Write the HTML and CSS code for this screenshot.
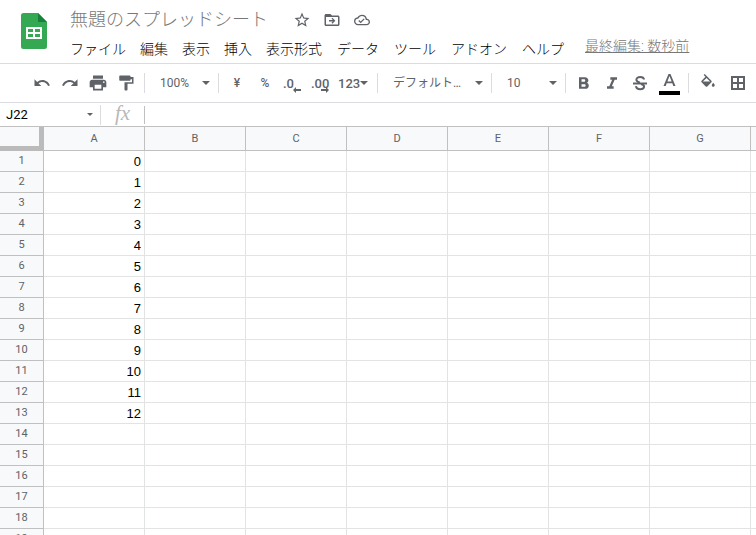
FILE: index.html
```html
<!DOCTYPE html>
<html lang="ja">
<head>
    <meta charset="utf-8">
    <title>無題のスプレッドシート</title>
    <link rel="stylesheet" href="styles.css">
</head>
<body>
    <header class="header">
        <a class="logo" href="#" aria-label="ホーム">
            <svg width="26" height="36" viewBox="0 0 26 36">
                <path fill="#34a853" d="M2.500 0H17l9 9v24.500a2.500 2.500 0 0 1-2.500 2.500h-21A2.500 2.500 0 0 1 0 33.500v-31A2.500 2.500 0 0 1 2.500 0z"/>
                <path fill="#188038" d="M17 0l9 9h-9z"/>
                <path fill="#fff" fill-rule="evenodd" d="M5 14h16v12H5zM7 16v3h5v-3zM14 16v3h5v-3zM7 21v3h5v-3zM14 21v3h5v-3z"/>
            </svg>
        </a>
        <div class="header-main">
            <div class="title-row">
                <h1 class="title">無題のスプレッドシート</h1>
                <button class="title-button" aria-label="スター">
                    <svg width="18" height="18" viewBox="0 0 24 24"><path d="M22 9.240l-7.190-.62L12 2 9.190 8.630 2 9.240l5.460 4.730L5.820 21 12 17.270 18.180 21l-1.630-7.030L22 9.240zM12 15.400l-3.760 2.270 1-4.280-3.320-2.880 4.380-.38L12 6.100l1.710 4.040 4.380.38-3.320 2.880 1 4.280L12 15.400z"/></svg>
                </button>
                <button class="title-button" aria-label="移動">
                    <svg width="18" height="18" viewBox="0 0 24 24"><path d="M20 6h-8l-2-2H4c-1.100 0-2 .9-2 2v12c0 1.100.9 2 2 2h16c1.100 0 2-.9 2-2V8c0-1.100-.9-2-2-2zm0 12H4V8h16v10zm-7.500-1l4-4-4-4-1.200 1.200 1.900 1.900H8v1.800h5.200l-1.900 1.900z"/></svg>
                </button>
                <button class="title-button" aria-label="保存状況">
                    <svg width="16" height="16" viewBox="0 0 24 24"><path d="M19.350 10.040A7.490 7.490 0 0 0 12 4C9.110 4 6.600 5.640 5.350 8.040A5.994 5.994 0 0 0 0 14c0 3.310 2.690 6 6 6h13c2.760 0 5-2.240 5-5 0-2.640-2.050-4.780-4.650-4.960zM19 18H6c-2.210 0-4-1.790-4-4 0-2.050 1.530-3.760 3.560-3.970l1.070-.11.5-.95A5.469 5.469 0 0 1 12 6c2.620 0 4.880 1.860 5.390 4.430l.3 1.500 1.530.11A2.980 2.980 0 0 1 22 15c0 1.650-1.350 3-3 3zm-9-3.820l-2.090-2.090L6.500 13.500 10 17l6.010-6.010-1.410-1.410z"/></svg>
                </button>
            </div>
            <nav class="menu">
                <button class="menu-item">ファイル</button>
                <button class="menu-item">編集</button>
                <button class="menu-item">表示</button>
                <button class="menu-item">挿入</button>
                <button class="menu-item">表示形式</button>
                <button class="menu-item">データ</button>
                <button class="menu-item">ツール</button>
                <button class="menu-item">アドオン</button>
                <button class="menu-item">ヘルプ</button>
                <a class="last-edit" href="#">最終編集: 数秒前</a>
            </nav>
        </div>
    </header>

    <div class="toolbar">
        <button class="tool" aria-label="元に戻す">
            <svg width="18" height="18" viewBox="0 0 24 24"><path d="M12.500 8c-2.650 0-5.050.99-6.900 2.600L2 7v9h9l-3.620-3.620c1.390-1.160 3.160-1.880 5.120-1.880 3.540 0 6.550 2.310 7.600 5.500l2.370-.78C21.080 11.030 17.150 8 12.500 8z"/></svg>
        </button>
        <button class="tool" aria-label="やり直し">
            <svg width="18" height="18" viewBox="0 0 24 24"><path d="M18.400 10.600C16.550 8.990 14.150 8 11.500 8c-4.650 0-8.580 3.030-9.960 7.220L3.900 16c1.050-3.190 4.050-5.500 7.600-5.500 1.950 0 3.730.72 5.120 1.880L13 16h9V7l-3.600 3.600z"/></svg>
        </button>
        <button class="tool" aria-label="印刷">
            <svg width="20" height="20" viewBox="0 0 24 24"><path d="M19 8H5c-1.660 0-3 1.340-3 3v6h4v4h12v-4h4v-6c0-1.660-1.340-3-3-3zm-3 11H8v-5h8v5zm3-7c-.55 0-1-.45-1-1s.45-1 1-1 1 .45 1 1-.45 1-1 1zm-1-9H6v4h12V3z"/></svg>
        </button>
        <button class="tool" aria-label="書式を貼り付け">
            <svg width="18" height="18" viewBox="0 0 24 24"><path d="M18 4V3c0-.55-.45-1-1-1H4c-.55 0-1 .45-1 1v5c0 .55.45 1 1 1h13c.55 0 1-.45 1-1V7h2v4H10v10c0 .55.45 1 1 1h2c.55 0 1-.45 1-1v-8h8V4h-4z"/></svg>
        </button>
        <span class="separator"></span>
        <div class="select-box zoom-box">
            <select class="select" aria-label="ズーム"><option>100%</option></select>
        </div>
        <span class="separator"></span>
        <button class="tool">¥</button>
        <button class="tool">%</button>
        <button class="tool decimal">.0
            <svg class="decimal-arrow" width="8" height="6" viewBox="0 0 8 6"><path d="M0 3l3-3v2h5v2H3v2z"/></svg>
        </button>
        <button class="tool decimal">.00
            <svg class="decimal-arrow" width="8" height="6" viewBox="0 0 8 6"><path d="M8 3L5 0v2H0v2h5v2z"/></svg>
        </button>
        <button class="tool format-button">123<span class="caret"></span></button>
        <span class="separator"></span>
        <div class="select-box font-box">
            <select class="select" aria-label="フォント"><option>デフォルト…</option></select>
        </div>
        <span class="separator"></span>
        <div class="select-box size-box">
            <select class="select" aria-label="フォントサイズ"><option>10</option></select>
        </div>
        <span class="separator"></span>
        <button class="tool" aria-label="太字">
            <svg width="20" height="20" viewBox="0 0 24 24"><path d="M15.600 11.790c.97-.67 1.650-1.770 1.650-2.790 0-2.260-1.750-4-4-4H6v14h8.040c2.090 0 3.710-1.700 3.710-3.790 0-1.520-.86-2.820-2.150-3.420zM9 7.500h3c.83 0 1.500.67 1.500 1.500s-.67 1.500-1.500 1.500H9v-3zm3.500 9H9v-3h3.500c.83 0 1.500.67 1.500 1.500s-.67 1.500-1.500 1.500z"/></svg>
        </button>
        <button class="tool" aria-label="斜体">
            <svg width="20" height="20" viewBox="0 0 24 24"><path d="M10 5v3h2.210l-3.420 8H6v3h8v-3h-2.210l3.420-8H18V5z"/></svg>
        </button>
        <button class="tool" aria-label="取り消し線">
            <svg width="18" height="18" viewBox="0 0 18 18"><path fill="none" stroke="#5f6368" stroke-width="2" d="M13 5.500C12.800 3.800 11.300 3 9.200 3 6.900 3 5.400 4.100 5.400 5.700c0 1.500 1.200 2.300 3.600 2.900M10 10c2 .5 3.100 1.300 3.100 2.600 0 1.600-1.600 2.600-3.900 2.600-2.400 0-4-1.100-4.200-3"/><path d="M2 8.500h14v2H2z"/></svg>
        </button>
        <button class="tool color-tool" aria-label="テキストの色">
            <svg width="21" height="24" viewBox="0 0 21 24"><path fill-rule="evenodd" d="M9.500 3h2l5 12h-2.200l-1-2.700H7.700l-1 2.700H4.500zM8.400 10.500h4.200l-2.100-5.600z"/><path fill="#000" d="M0 20h21v4H0z"/></svg>
        </button>
        <span class="separator"></span>
        <button class="tool color-tool" aria-label="塗りつぶしの色">
            <svg width="18" height="18" viewBox="0 0 24 24"><path d="M16.560 8.940L7.620 0 6.210 1.410l2.380 2.380-5.150 5.150a1.490 1.490 0 0 0 0 2.120l5.500 5.500c.29.290.68.440 1.060.440s.77-.15 1.060-.44l5.500-5.500c.59-.58.59-1.530 0-2.120zM5.210 10L10 5.210 14.790 10H5.210zM19 11.500s-2 2.170-2 3.500c0 1.100.9 2 2 2s2-.9 2-2c0-1.330-2-3.500-2-3.500z"/></svg>
        </button>
        <button class="tool color-tool" aria-label="枠線">
            <svg width="18" height="18" viewBox="0 0 18 18"><path fill-rule="evenodd" d="M2 2h14v14H2zM4 4v4h4V4zM10 4v4h4V4zM4 10v4h4v-4zM10 10v4h4v-4z"/></svg>
        </button>
    </div>

    <div class="formula-bar">
        <div class="name-box">
            <input class="name-input" type="text" value="J22" aria-label="名前ボックス">
            <span class="caret small"></span>
        </div>
        <label class="fx" for="formula">fx</label>
        <input class="formula-input" id="formula" type="text">
    </div>

    <main class="sheet">
        <table class="grid">
            <thead>
                <tr>
                    <th class="corner"></th>
                    <th>A</th>
                    <th>B</th>
                    <th>C</th>
                    <th>D</th>
                    <th>E</th>
                    <th>F</th>
                    <th>G</th>
                    <th>H</th>
                </tr>
            </thead>
            <tbody></tbody>
        </table>
    </main>

    <script>
        const body = document.querySelector("tbody");
        const rowCount = 19;
        const columnCount = 8;
        const lastValue = 12;

        for (let i = 0; i < rowCount; i++) {
            const row = body.insertRow();
            const head = document.createElement("th");
            head.textContent = i + 1;
            row.appendChild(head);

            for (let j = 0; j < columnCount; j++) {
                const cell = row.insertCell();
                if (j === 0 && i <= lastValue) {
                    cell.textContent = i;
                }
            }
        }
    </script>
</body>
</html>
```
FILE: styles.css
```css
* {
    box-sizing: border-box;
}

body {
    display: flex;
    flex-direction: column;
    height: 100vh;
    margin: 0;
    overflow: hidden;
    background-color: #fff;
    font-family: Roboto, "Noto Sans CJK JP", sans-serif;
}

button, input, select {
    margin: 0;
    padding: 0;
    border: none;
    background: none;
    font-family: inherit;
}

button {
    cursor: pointer;
}

svg {
    display: block;
    fill: #5f6368;
}

.header {
    display: flex;
    flex: none;
    height: 64px;
    border-bottom: 1px solid #dadce0;
}

.logo {
    padding: 13px 16px 0 21px;
}

.header-main {
    padding-top: 6px;
    white-space: nowrap;
}

.title-row {
    display: flex;
    align-items: center;
    height: 28px;
}

.title {
    margin: 0 19px 0 0;
    padding-left: 7px;
    color: #777;
    font-size: 18px;
    font-weight: 300;
    line-height: 28px;
}

.title-button {
    display: flex;
    justify-content: center;
    width: 30px;
}

.menu {
    display: flex;
    height: 29px;
}

.menu-item {
    padding: 0 7px;
    color: #000;
    font-size: 14px;
    font-weight: 300;
    line-height: 28px;
}

.menu-item:nth-child(n+6) {
    padding-left: 8px;
}

.last-edit {
    margin-left: 14px;
    color: #777;
    font-size: 14px;
    font-weight: 300;
    line-height: 24px;
}

.toolbar {
    display: flex;
    flex: none;
    align-items: center;
    height: 39px;
    padding-left: 28px;
    border-bottom: 1px solid #dadce0;
}

.tool {
    display: flex;
    flex: none;
    align-items: center;
    justify-content: center;
    width: 28px;
    height: 26px;
    color: #5f6368;
    font-size: 12px;
    font-weight: 500;
}

.separator {
    flex: none;
    width: 1px;
    height: 20px;
    margin: 0 4px;
    background-color: #dadce0;
}

.select-box {
    display: flex;
    flex: none;
    position: relative;
    align-items: center;
}

.select-box::after, .caret {
    border: 4px solid transparent;
    border-top-color: #5f6368;
    border-bottom: none;
    content: "";
}

.select-box::after {
    position: absolute;
    right: 4px;
    pointer-events: none;
}

.zoom-box, .size-box {
    width: 65px;
}

.font-box {
    width: 105px;
}

.select {
    appearance: none;
    width: 100%;
    height: 26px;
    padding-left: 11px;
    color: #5f6368;
    font-size: 12px;
}

.decimal {
    position: relative;
    justify-content: flex-start;
    padding-left: 4px;
    font-size: 13px;
}

.decimal-arrow {
    position: absolute;
    right: 6px;
    bottom: 3px;
}

.format-button {
    justify-content: flex-start;
    width: 38px;
    padding-left: 3px;
    font-size: 13px;
}

.color-tool {
    width: 30px;
}

.formula-bar {
    display: flex;
    flex: none;
    align-items: center;
    height: 24px;
    border-bottom: 1px solid #c0c0c0;
}

.name-box {
    display: flex;
    align-items: center;
    width: 101px;
    height: 20px;
    padding: 0 7px 0 6px;
    border-right: 1px solid #dadce0;
}

.name-input {
    flex: 1;
    min-width: 0;
    color: #000;
    font-size: 13px;
}

.caret.small {
    border-width: 3px 3px 0;
}

.fx {
    width: 43px;
    padding-bottom: 4px;
    color: #b8b8b8;
    font-family: "Liberation Serif", serif;
    font-size: 21px;
    font-style: italic;
    line-height: 20px;
    text-align: center;
}

.formula-input {
    flex: 1;
    height: 18px;
    padding-left: 6px;
    border-left: 1px solid #c0c0c0;
    font-size: 13px;
}

.sheet {
    flex: 1;
    min-height: 0;
    overflow: hidden;
}

.grid {
    width: max-content;
    border-spacing: 0;
}

th {
    min-width: 101px;
    padding: 0;
    border-right: 1px solid #c0c0c0;
    border-bottom: 1px solid #c0c0c0;
    background-color: #f8f9fa;
    color: #5f6368;
    font-size: 11px;
    font-weight: 400;
}

thead th {
    height: 24px;
}

tbody th {
    min-width: 44px;
    line-height: 18px;
}

.corner {
    min-width: 44px;
    border-right: 5px solid #bbb;
    border-bottom: 5px solid #bbb;
}

td {
    height: 21px;
    padding: 2px 3px 0;
    border-right: 1px solid #e2e3e3;
    border-bottom: 1px solid #e2e3e3;
    color: #000;
    font-family: "Liberation Sans", sans-serif;
    font-size: 13px;
    line-height: 18px;
    text-align: right;
}
```
